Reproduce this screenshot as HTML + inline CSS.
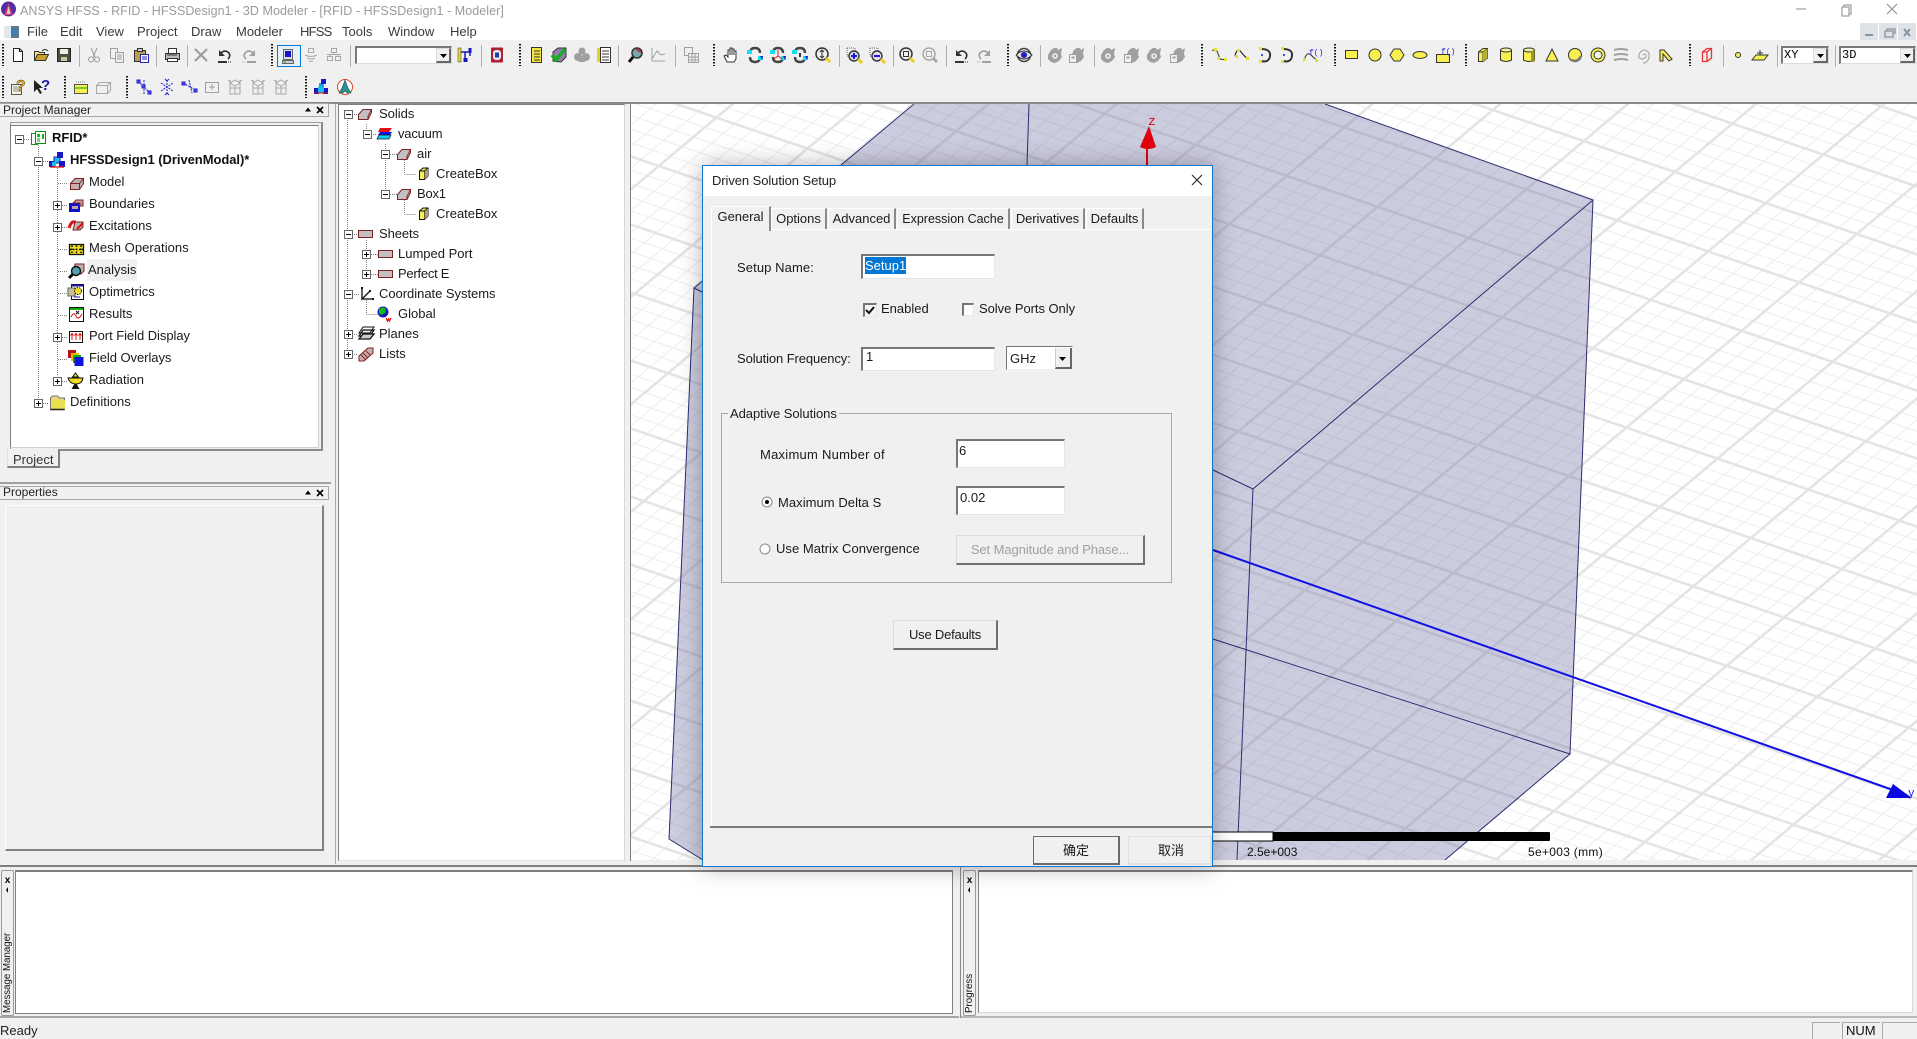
<!DOCTYPE html>
<html><head><meta charset="utf-8"><title>ANSYS HFSS</title>
<style>
html,body{margin:0;padding:0;background:#f0f0f0}
body{position:relative;width:1917px;height:1039px;overflow:hidden;font-family:"Liberation Sans","Noto Sans CJK SC",sans-serif;font-size:13px;color:#1a1a1a}
.a{position:absolute;box-sizing:border-box}
.t{position:absolute;white-space:nowrap;line-height:16px}
.m{font-size:13px;color:#3a3a3a}
.in{position:absolute;box-sizing:border-box;background:#fff;border-top:2px solid #767676;border-left:2px solid #767676;border-right:1px solid #e6e6e6;border-bottom:1px solid #e6e6e6}
.btn{position:absolute;box-sizing:border-box;background:#f0f0f0;border-top:1px solid #dcdcdc;border-left:1px solid #dcdcdc;border-right:2px solid #6f6f6f;border-bottom:2px solid #6f6f6f;text-align:center}
.tab{position:absolute;box-sizing:border-box;background:#f0f0f0;border-top:1px solid #fff;border-left:1px solid #fff;border-right:2px solid #8a8a8a;text-align:center;line-height:19px;height:21px;top:208px}
.d{z-index:20}
svg{position:absolute;left:0;top:0;overflow:visible}
</style></head><body>

<!-- title + menu -->
<div class="a" style="left:0;top:0;width:1917px;height:40px;background:#fff"></div>
<div class="t" style="left:20px;top:3px;color:#9a9a9a;font-size:12.5px;letter-spacing:.06px">ANSYS HFSS - RFID - HFSSDesign1 - 3D Modeler - [RFID - HFSSDesign1 - Modeler]</div>
<div class="t m" style="left:27px;top:24px">File</div>
<div class="t m" style="left:60px;top:24px">Edit</div>
<div class="t m" style="left:96px;top:24px">View</div>
<div class="t m" style="left:137px;top:24px">Project</div>
<div class="t m" style="left:191px;top:24px">Draw</div>
<div class="t m" style="left:236px;top:24px">Modeler</div>
<div class="t m" style="left:300px;top:24px;letter-spacing:-.8px">HFSS</div>
<div class="t m" style="left:342px;top:24px">Tools</div>
<div class="t m" style="left:388px;top:24px">Window</div>
<div class="t m" style="left:450px;top:24px">Help</div>
<div class="a" style="left:1860px;top:23px;width:18px;height:17px;background:#dfe3e8"></div>
<div class="a" style="left:1879px;top:23px;width:18px;height:17px;background:#dfe3e8"></div>
<div class="a" style="left:1898px;top:23px;width:18px;height:17px;background:#dfe3e8"></div>

<!-- toolbar bottom line -->
<div class="a" style="left:0;top:102px;width:1917px;height:2px;background:#8a8a8a"></div>
<!-- selected toolbar -->
<div class="a" style="left:277px;top:45px;width:24px;height:22px;border:1px solid #0078d7;background:#e5f1fb"></div>
<!-- combos -->
<div class="a" style="left:355px;top:46px;width:97px;height:18px;background:#fff;border:2px solid #7a7a7a;border-right:1px solid #ddd;border-bottom:1px solid #ddd"></div>
<div class="a" style="left:436px;top:48px;width:15px;height:15px;background:#f0f0f0;border-right:2px solid #666;border-bottom:2px solid #666;border-top:1px solid #ddd;border-left:1px solid #ddd"></div>
<div class="a" style="left:1781px;top:46px;width:48px;height:18px;background:#fff;border:2px solid #7a7a7a;border-right:1px solid #ddd;border-bottom:1px solid #ddd"></div>
<div class="a" style="left:1813px;top:48px;width:15px;height:15px;background:#f0f0f0;border-right:2px solid #666;border-bottom:2px solid #666;border-top:1px solid #ddd;border-left:1px solid #ddd"></div>
<div class="t" style="left:1784px;top:47px;font-family:'Liberation Mono',monospace;font-size:12px;color:#000">XY</div>
<div class="a" style="left:1839px;top:46px;width:77px;height:18px;background:#fff;border:2px solid #7a7a7a;border-right:1px solid #ddd;border-bottom:1px solid #ddd"></div>
<div class="a" style="left:1900px;top:48px;width:15px;height:15px;background:#f0f0f0;border-right:2px solid #666;border-bottom:2px solid #666;border-top:1px solid #ddd;border-left:1px solid #ddd"></div>
<div class="t" style="left:1842px;top:47px;font-family:'Liberation Mono',monospace;font-size:12px;color:#000">3D</div>

<!-- left panel -->
<div class="a" style="left:0;top:103px;width:329px;height:14px;background:#f0f0f0;border:1px solid #a8a8a8;border-left:none"></div>
<div class="t" style="left:3px;top:102px;font-size:12px;color:#222">Project Manager</div>
<div class="a" style="left:10px;top:122px;width:313px;height:329px;border:1px solid #a0a0a0;border-right:2px solid #8a8a8a;border-bottom:2px solid #8a8a8a;background:#f0f0f0"></div>
<div class="a" style="left:10px;top:125px;width:309px;height:323px;background:#fff;border-left:1px solid #808080;border-top:1px solid #808080;border-right:1px solid #d0d0d0;border-bottom:1px solid #d0d0d0"></div>
<div class="a" style="left:87px;top:259px;width:50px;height:22px;background:#f0f0f0"></div>
<div class="a" style="left:7px;top:449px;width:53px;height:19px;background:#f0f0f0;border-left:1px solid #ddd;border-right:2px solid #808080;border-bottom:2px solid #808080"></div>
<div class="t" style="left:13px;top:452px;color:#333">Project</div>

<div class="t" style="left:52px;top:130px;font-weight:bold;color:#111">RFID*</div>
<div class="t" style="left:70px;top:152px;font-weight:bold;color:#111;letter-spacing:-.05px">HFSSDesign1 (DrivenModal)*</div>
<div class="t" style="left:89px;top:174px">Model</div>
<div class="t" style="left:89px;top:196px">Boundaries</div>
<div class="t" style="left:89px;top:218px">Excitations</div>
<div class="t" style="left:89px;top:240px;letter-spacing:.05px">Mesh Operations</div>
<div class="t" style="left:88px;top:262px">Analysis</div>
<div class="t" style="left:89px;top:284px">Optimetrics</div>
<div class="t" style="left:89px;top:306px">Results</div>
<div class="t" style="left:89px;top:328px;letter-spacing:-.05px">Port Field Display</div>
<div class="t" style="left:89px;top:350px;letter-spacing:-.05px">Field Overlays</div>
<div class="t" style="left:89px;top:372px">Radiation</div>
<div class="t" style="left:70px;top:394px">Definitions</div>

<div class="a" style="left:0;top:482px;width:331px;height:2px;background:#a0a0a0"></div>
<div class="a" style="left:0;top:486px;width:329px;height:14px;background:#f0f0f0;border:1px solid #a8a8a8;border-left:none"></div>
<div class="t" style="left:3px;top:484px;font-size:12px;color:#222">Properties</div>
<div class="a" style="left:5px;top:505px;width:319px;height:346px;border-top:1px solid #fff;border-left:1px solid #fff;border-right:2px solid #808080;border-bottom:2px solid #808080"></div>
<div class="a" style="left:335px;top:104px;width:1px;height:760px;background:#a8a8a8"></div>

<!-- middle tree -->
<div class="a" style="left:338px;top:104px;width:287px;height:757px;background:#fff;border-left:1px solid #808080;border-top:1px solid #808080;border-right:1px solid #d8d8d8;border-bottom:1px solid #e4e4e4"></div>
<div class="t" style="left:379px;top:106px">Solids</div>
<div class="t" style="left:398px;top:126px;letter-spacing:-.2px">vacuum</div>
<div class="t" style="left:417px;top:146px">air</div>
<div class="t" style="left:436px;top:166px">CreateBox</div>
<div class="t" style="left:417px;top:186px;letter-spacing:-.2px">Box1</div>
<div class="t" style="left:436px;top:206px">CreateBox</div>
<div class="t" style="left:379px;top:226px;letter-spacing:-.1px">Sheets</div>
<div class="t" style="left:398px;top:246px">Lumped Port</div>
<div class="t" style="left:398px;top:266px;letter-spacing:-.25px">Perfect E</div>
<div class="t" style="left:379px;top:286px;letter-spacing:-.03px">Coordinate Systems</div>
<div class="t" style="left:398px;top:306px">Global</div>
<div class="t" style="left:379px;top:326px">Planes</div>
<div class="t" style="left:379px;top:346px">Lists</div>

<!-- 3D view -->
<svg width="1917" height="1039" style="z-index:1">
<defs>
<clipPath id="vc"><rect x="630" y="104" width="1287" height="756"/></clipPath>
<pattern id="grid" patternUnits="userSpaceOnUse" width="100" height="100" patternTransform="matrix(.91 .31 -.576 .484 1823.4 154.6)">
<g stroke="#ebebeb" fill="none">
<path d="M0 20H100M0 40H100M0 60H100M0 80H100" stroke-width="1.4"/>
<path d="M20 0V100M40 0V100M60 0V100M80 0V100" stroke-width="1.1"/>
</g>
<g stroke="#e4e4e4" fill="none">
<path d="M0 0H100M0 100H100" stroke-width="4"/>
<path d="M0 0V100M100 0V100" stroke-width="3.2"/>
</g>
</pattern>
</defs>
<g clip-path="url(#vc)">
<rect x="630" y="104" width="1287" height="756" fill="#fff"/>
<rect x="630" y="104" width="1287" height="756" fill="url(#grid)"/>
<path d="M914 104H1325L1593 200L1570 754L1445 860H703L669 839L694 288Z" fill="#7576a7" fill-opacity=".37"/>
<g fill="none" stroke="#2d2d70" stroke-width="1">
<path d="M914 104L694 288L669 839L703 860"/>
<path d="M1325 104L1593 200L1570 754L1445 860"/>
<path d="M1593 200L1253 489L1237 860"/>
<path d="M1253 489L1213 470"/>
<path d="M1213 639L1570 754"/>
<path d="M1029 104L1027 165"/>
<path d="M694 288L706 294"/>
</g>
<path d="M1213 550L1893 790" stroke="#1212e6" stroke-width="2" fill="none"/>
<path d="M1893 784L1886 798H1912Z" fill="#0a0ae0"/>
<text x="1908" y="796" font-family="Liberation Mono,monospace" font-size="11" fill="#1212e6">y</text>
<path d="M1149 126L1140 147Q1148 151 1156 147Z" fill="#e00010"/>
<path d="M1147 147V166" stroke="#e00010" stroke-width="2"/>
<text x="1148" y="125" font-family="Liberation Mono,monospace" font-size="13" fill="#e00010">z</text>
<rect x="1150" y="832" width="123" height="9" fill="#fff" stroke="#000"/>
<rect x="1273" y="832" width="277" height="9" rx="1" fill="#000"/>
</g>
<path d="M630.500 104V861" stroke="#808080" fill="none"/>
</svg>
<div class="t" style="left:1247px;top:844px;font-size:12px;color:#111;z-index:2">2.5e+003</div>
<div class="t" style="left:1528px;top:844px;font-size:12px;color:#111;z-index:2;letter-spacing:.3px">5e+003 (mm)</div>

<!-- lower panes -->
<div class="a" style="left:0;top:865px;width:1917px;height:2px;background:#808080"></div>
<div class="a" style="left:1px;top:870px;width:13px;height:146px;border:1px solid #9a9a9a;border-radius:2px"></div>
<div class="a" style="left:15px;top:870px;width:938px;height:144px;background:#fff;border:1px solid #808080;border-top:2px solid #808080"></div>
<div class="a" style="left:0;top:1016px;width:959px;height:2px;background:#a6a6a6"></div>
<div class="a" style="left:960px;top:866px;width:1px;height:152px;background:#8a8a8a"></div>
<div class="a" style="left:963px;top:870px;width:13px;height:146px;border:1px solid #9a9a9a;border-radius:2px"></div>
<div class="a" style="left:978px;top:870px;width:935px;height:143px;background:#fff;border-left:1px solid #808080;border-top:2px solid #808080;border-right:1px solid #d8d8d8;border-bottom:1px solid #d8d8d8"></div>
<div class="a" style="left:961px;top:1016px;width:956px;height:2px;background:#b8b8b8"></div>
<div class="t" style="left:3px;top:876px;width:9px;height:11px;font:bold 10px/10px 'Liberation Sans',sans-serif;color:#000;text-align:center">x</div>
<div class="t" style="left:965px;top:876px;width:9px;height:11px;font:bold 10px/10px 'Liberation Sans',sans-serif;color:#000;text-align:center">x</div>
<div class="t" style="left:1px;top:933px;width:13px;height:80px;line-height:13px;writing-mode:vertical-rl;transform:rotate(180deg);font-size:9.7px;color:#111">Message Manager</div>
<div class="t" style="left:964px;top:973px;width:12px;height:40px;line-height:12px;writing-mode:vertical-rl;transform:rotate(180deg);font-size:9.8px;color:#111">Progress</div>
<div class="t" style="left:0;top:1023px;color:#222">Ready</div>
<div class="a" style="left:1812px;top:1022px;width:28px;height:17px;border-top:1px solid #a8a8a8;border-left:1px solid #a8a8a8"></div>
<div class="a" style="left:1842px;top:1022px;width:38px;height:17px;border-top:1px solid #a8a8a8;border-left:1px solid #a8a8a8"></div>
<div class="t" style="left:1846px;top:1023px;color:#111;font-size:13px">NUM</div>
<div class="a" style="left:1882px;top:1022px;width:35px;height:17px;border-top:1px solid #a8a8a8;border-left:1px solid #a8a8a8"></div>

<!-- icons -->
<svg width="1917" height="1039" style="z-index:3">
<defs>
<g id="grip"><path d="M0 0V22" stroke="#111" stroke-width="2" stroke-dasharray="1.5 1.5"/></g>
<g id="sep"><path d="M.5 0V22" stroke="#b0b0b0"/></g>
<g id="pl"><rect x=".5" y=".5" width="8" height="8" fill="#fff" stroke="#666"/><path d="M2 4.500H7M4.500 2V7" stroke="#000"/></g>
<g id="mi"><rect x=".5" y=".5" width="8" height="8" fill="#fff" stroke="#666"/><path d="M2 4.500H7" stroke="#000"/></g>
<!-- toolbar -->
<g id="new"><path d="M3.500 1.500h6l3 3v10h-9z" fill="#fff" stroke="#222"/><path d="M9.500 1.500v3h3" fill="none" stroke="#222"/></g>
<g id="open"><path d="M1.500 13.500v-9h4l1 1h5v2" fill="#f4e27a" stroke="#333"/><path d="M1.500 13.500l3-6h11l-3 6z" fill="#c9a02a" stroke="#333"/><path d="M9 4q3-3 6 0" stroke="#333" fill="none"/></g>
<g id="save"><path d="M1.500 1.500h13v13h-13z" fill="#4e4e3a" stroke="#222"/><path fill="#eee" d="M4 2h8v5H4z"/><path fill="#c8c8a8" d="M5 10h6v4H5z"/></g>
<g id="cut" fill="none" stroke="#9a9a9a"><path d="M5 1l4 9M11 1L7 10"/><circle cx="5" cy="12.500" r="2.500"/><circle cx="11" cy="12.500" r="2.500"/></g>
<g id="copy" stroke="#a0a0a0" fill="#f0f0f0"><path d="M1.500 1.500h7v10h-7z"/><path d="M6.500 5.500h8v10h-8z"/><path d="M8 8h5M8 10h5M8 12h5" fill="none"/></g>
<g id="paste"><path d="M1.500 3.500h11v11h-11z" fill="#b8a050" stroke="#333"/><path d="M4.500 1.500h5v3h-5z" fill="#ccc" stroke="#333"/><path d="M7.500 7.500h8v8h-8z" fill="#fff" stroke="#2222b0"/><path d="M9 10h5M9 12h5" stroke="#2222b0"/></g>
<g id="print"><path d="M4.500 1.500h8v5h-8z" fill="#fff" stroke="#333"/><path d="M1.500 6.500h14v6h-14z" fill="#bbb" stroke="#333"/><path d="M3.500 11.500h10v3h-10z" fill="#fff" stroke="#333"/><path d="M3 8h10" stroke="#333"/></g>
<g id="del"><path d="M2 2L14 14M14 2L2 14" stroke="#9a9a9a" stroke-width="2"/></g>
<g id="undo" fill="none"><path d="M4 6Q8 2 12 6Q14 9 11 12" stroke="#333" stroke-width="1.600"/><path d="M2 3v6h6z" fill="#333"/><path d="M1 15h9" stroke="#333" stroke-width="2"/><path d="M11 15h4" stroke="#333" stroke-dasharray="1 1"/></g>
<g id="redo" fill="none"><path d="M12 6Q8 2 4 6Q2 9 5 12" stroke="#a0a0a0" stroke-width="1.600"/><path d="M14 3v6H8z" fill="#a0a0a0"/><path d="M6 15h9" stroke="#a0a0a0" stroke-width="2"/><path d="M1 15h4" stroke="#a0a0a0" stroke-dasharray="1 1"/></g>
<g id="mon"><path d="M3.500 1.500h9v10h-9z" fill="#ddd" stroke="#666"/><path d="M5 3h6v6H5z" fill="#1414d0"/><path d="M2.500 12.500h11v3h-11z" fill="#ccc" stroke="#666"/><path d="M4 14h2" stroke="#0a0"/></g>
<g id="gs1" stroke="#a8a8a8" fill="none"><path d="M5.500 1.500h5v4h-5z"/><path d="M2 8q6 3 12 0M4 11q4 2 8 0M6 14q2 1 4 0"/></g>
<g id="gs2" stroke="#a8a8a8" fill="none"><path d="M5.500 1.500h5v4h-5zM1.500 9.500h5v4h-5zM9.500 9.500h5v4h-5zM8 5.500v2M4 9.500v-2h8v2M1 7.500h3M12 7.500h3"/></g>
<g id="tree"><path d="M2 1v12M12 1v8M2 5h10M7 5v9" stroke="#1818c0" stroke-width="1.500" fill="none"/><rect x="0" y="1" width="3" height="14" fill="#e8d840" stroke="#333" stroke-width=".5"/><rect x="10.500" y="1" width="3" height="5" fill="#1818c0"/><rect x="5.500" y="11" width="4" height="4" fill="#1818c0"/></g>
<g id="qr"><rect x="2" y="0.500" width="12" height="15" fill="#b02030" rx="1"/><rect x="4" y="3" width="8" height="10" fill="#e8e8f8" rx="3"/><rect x="6" y="5.500" width="4" height="5" fill="#2040a0"/></g>
<g id="ydoc"><path d="M2.500 .5h10v15h-10z" fill="#f6e640" stroke="#333"/><path d="M5 4h6M5 7h6M5 10h6M5 13h6" stroke="#333"/></g>
<g id="chk"><path d="M2 14V5l5-4h8v9l-5 5z" fill="#9a7ab0" stroke="#333"/><path d="M1 8l4 5 9-11" stroke="#10b020" stroke-width="3.500" fill="none"/></g>
<g id="blob" fill="#a0a0a0"><circle cx="8" cy="4" r="3.500"/><circle cx="4" cy="10" r="4"/><circle cx="12" cy="10" r="4"/><rect x="5" y="11" width="6" height="4"/></g>
<g id="ldoc"><path d="M3.500 .5h10v15h-10z" fill="#fff" stroke="#333"/><path d="M5 4h7M5 7h7M5 10h7M5 13h7" stroke="#333"/><path d="M1.500 1v14" stroke="#e8d020" stroke-width="3"/></g>
<g id="mag"><circle cx="9" cy="6" r="5" fill="#7aa" stroke="#333" stroke-width="1.600"/><path d="M5 10l-4 5" stroke="#111" stroke-width="3"/><path d="M8 2l5 3" stroke="#b03040" stroke-width="2"/></g>
<g id="plot" fill="none" stroke="#a0a0a0"><path d="M2 1v13h13"/><path d="M2 12l5-8 4 4 4-1"/></g>
<g id="tbl" stroke="#a0a0a0" fill="#f0f0f0"><path d="M1.500 .5h8v8h-8z"/><path d="M5.500 6.500h10v9h-10z"/><path d="M5.500 10h10M5.500 13h10M9 6.500v9M12 6.500v9" fill="none"/></g>
<g id="hand" fill="#fff" stroke="#333"><path d="M4 15L1 9l2-1 2 2V3h2v5V1h2v7V2h2v6V4h2v8l-2 3z"/></g>
<g id="rot" fill="none"><path d="M3 6Q3 1 8 1T13 6" stroke="#444" stroke-width="2.400"/><path d="M3 10Q3 15 8 15T13 10" stroke="#444" stroke-width="2.400"/><path d="M0 3h5v4H0z" fill="#10e0f0"/><path d="M11 13h5v-4h-5z" fill="#10e0f0"/><path d="M13 9l3 0-1 4z" fill="#2020d0"/></g>
<g id="rot2" fill="none"><use href="#rot"/><path d="M8 3v6M4 12l4-3 4 3" stroke="#d02020"/></g>
<g id="rot3" fill="none"><use href="#rot"/><path d="M8 6v4" stroke="#333" stroke-width="2"/></g>
<g id="zm" fill="none"><circle cx="7" cy="7" r="6" stroke="#333" stroke-width="1.500"/><path d="M7 3v8M5 5l2-2 2 2M5 9l2 2 2-2" stroke="#333"/><path d="M11 11l4 4" stroke="#e8d020" stroke-width="3"/></g>
<g id="zin" fill="none"><path d="M1 1h8v3M1 1v8h3" stroke="#666" stroke-dasharray="1 1"/><circle cx="8" cy="9" r="5" fill="#dde" stroke="#333" stroke-width="1.400"/><path d="M5 9h6M8 6v6" stroke="#1818d0" stroke-width="2"/><path d="M12 12l4 4" stroke="#e8d020" stroke-width="3"/></g>
<g id="zout" fill="none"><path d="M1 1h8v3M1 1v8h3" stroke="#666" stroke-dasharray="1 1"/><circle cx="8" cy="9" r="5" fill="#dde" stroke="#333" stroke-width="1.400"/><path d="M5 9h6" stroke="#1818d0" stroke-width="2"/><path d="M12 12l4 4" stroke="#e8d020" stroke-width="3"/></g>
<g id="zf" fill="none"><circle cx="7" cy="7" r="6" stroke="#333" stroke-width="1.500"/><rect x="4.500" y="4.500" width="5" height="5" stroke="#333"/><path d="M11 11l4 4" stroke="#e8d020" stroke-width="3"/></g>
<g id="zg" fill="none"><circle cx="7" cy="7" r="6" stroke="#a8a8a8" stroke-width="1.500"/><rect x="4.500" y="4.500" width="5" height="5" stroke="#a8a8a8"/><path d="M11 11l4 4" stroke="#a8a8a8" stroke-width="3"/></g>
<g id="eye" fill="none"><circle cx="8" cy="8" r="6.500" stroke="#444" stroke-width="1.600"/><path d="M0 8q8-8 16 0q-8 8-16 0" fill="#ddd" stroke="#333"/><circle cx="8" cy="8" r="3" fill="#2020c0"/></g>
<g id="ge1" fill="#a0a0a0"><path d="M1 8L4 3l3-2h3l1 2 4-2-1 6 1 3-3 4-4 2-4-1-3-3z"/><circle cx="8" cy="9" r="2.800" fill="#f0f0f0"/><circle cx="8" cy="9" r="1.200"/></g>
<g id="ge2" fill="#a0a0a0"><path d="M3 7L5 3l3-2h3l1 2 3-2-1 6 1 3-3 4-4 2-4-2z"/><path d="M.5 7.500h7v8h-7z" fill="#f0f0f0" stroke="#a0a0a0"/><path d="M2.500 9.500h3v2h-3z"/></g>
<g id="lin" fill="none"><path d="M1 3l5 1 3 8 6 1" stroke="#333"/><path d="M3 1h3v3H3zM6 10h3v3H6zM13 11h3v3h-3z" fill="#e8e030"/></g>
<g id="spl" fill="none"><path d="M1 9Q3 0 7 5T13 11" stroke="#333" stroke-width="1.300"/><path d="M3 2h3v3H3zM1 8h3v3H1zM12 10h3v3h-3z" fill="#e8e030"/></g>
<g id="arc" fill="none"><path d="M4 2Q14 2 13 9T4 14" stroke="#333" stroke-width="2"/><path d="M2 0h3v3H2zM2 13h3v3H2z" fill="#e8e030"/><circle cx="5" cy="8" r="1" fill="#1818c0"/></g>
<g id="eq" fill="none"><path d="M1 13Q4 4 8 8T15 14" stroke="#333"/><path d="M0 11h3v3H0zM12 12h3v3h-3z" fill="#e8e030"/><text x="6" y="8" font-size="8" fill="#2020d0" font-family="Liberation Mono,monospace">f()</text></g>
<g id="rect"><rect x="1.500" y="3.500" width="12" height="8" fill="#f8f050" stroke="#333"/></g>
<g id="circ"><circle cx="8" cy="8" r="6" fill="#f8f050" stroke="#333"/></g>
<g id="hexa"><path d="M5 2h6l4 6-4 6H5L1 8z" fill="#f8f050" stroke="#333"/></g>
<g id="ell"><ellipse cx="8" cy="8" rx="7" ry="3.500" fill="#f8f050" stroke="#333"/></g>
<g id="eqs"><rect x="1.500" y="7.500" width="13" height="8" fill="#f8f050" stroke="#333"/><text x="6" y="7" font-size="8" fill="#2020d0" font-family="Liberation Mono,monospace">f()</text></g>
<g id="cube"><path d="M3.500 5L8 1.500h4.500V11L8 14.500H3.500z" fill="#f8f050" stroke="#333"/><path d="M3.500 5H8V14.500M8 5L12.500 1.500" fill="none" stroke="#333"/><path d="M8 5l4.500-3.500V11L8 14.500z" fill="#b8b030"/></g>
<g id="cyl"><path d="M2.500 3v10q5.500 3 11 0V3" fill="#f8f050" stroke="#333"/><ellipse cx="8" cy="3" rx="5.500" ry="2" fill="#f0f0a0" stroke="#333"/></g>
<g id="cyl2"><path d="M2.500 3v10q5.500 3 11 0V3" fill="#f8f050" stroke="#333"/><ellipse cx="8" cy="3" rx="5.500" ry="2" fill="#f0f0a0" stroke="#333"/><path d="M10 4v11h3.500V3z" fill="#a09820"/></g>
<g id="cone"><path d="M8 2L2 14h12z" fill="#f8f050" stroke="#333"/></g>
<g id="sph"><circle cx="8" cy="8" r="6.500" fill="#f8f050" stroke="#333"/><path d="M4 13q7 3 10-4" stroke="#777" stroke-width="2.500" fill="none"/></g>
<g id="tor"><circle cx="8" cy="8" r="5.500" fill="none" stroke="#333" stroke-width="4"/><circle cx="8" cy="8" r="5.500" fill="none" stroke="#f8f050" stroke-width="2"/></g>
<g id="helix" fill="none" stroke="#a0a0a0" stroke-width="2"><path d="M1 3q7-2 14 0M1 8q7-2 14 0M1 13q7-2 14 0"/></g>
<g id="spir" fill="none" stroke="#b0b0b0" stroke-width="1.300"><path d="M8 8q2-2 3 0t-3 4q-5 0-4-4t5-5q6 1 5 7t-6 6"/></g>
<g id="bond"><path d="M2 14V3h4l8 9-3 2-6-7H5v7z" fill="#f8f050" stroke="#333"/></g>
<g id="rbox"><path d="M3.500 5L8 1.500h4.500V11L8 14.500H3.500zM3.500 5H8V14.500M8 5L12.500 1.500" fill="none" stroke="#f03030" stroke-width="1.300"/></g>
<g id="pt"><circle cx="8" cy="8" r="2.500" fill="#f8f050" stroke="#333"/></g>
<g id="pln"><path d="M0 13L4 8h12l-4 5z" fill="#f8f050" stroke="#333"/><path d="M8 3v5M5 6h6" stroke="#333"/></g>
<g id="help"><path d="M1.500 5.500h10v10h-10z" fill="#f8f8e0" stroke="#555"/><path d="M3 8h7M3 10h7M3 12h7" stroke="#888"/><text x="6" y="12" font-size="16" font-weight="bold" fill="#e8b010" stroke="#333" stroke-width=".4" font-family="Liberation Sans,sans-serif">?</text></g>
<g id="whelp"><path d="M1 1v12l3-3 3 5 2-1-3-5h4z" fill="#222"/><text x="8" y="11" font-size="15" font-weight="bold" fill="#1818a0" font-family="Liberation Sans,sans-serif">?</text></g>
<g id="ybox"><path d="M1.500 5.500h13v9h-13z" fill="#f8f050" stroke="#555"/><path d="M1 9h14" stroke="#10a010"/><path d="M3 3h10" stroke="#888" stroke-dasharray="1 1"/></g>
<g id="gbox" stroke="#a8a8a8" fill="none"><path d="M1.500 6.500h11v8h-11zM1.500 6.500l3-3h11l-3 3M12.500 14.500l3-3v-8"/></g>
<g id="ax1" fill="none" stroke="#2020d0"><path d="M2 2l6 6 6 6M8 1v14" stroke-dasharray="2 1"/><path d="M1 1h3v3H1zM6 6h3v3H6zM12 12h3v3h-3z" fill="#5050e0"/></g>
<g id="ax2" fill="none" stroke="#2020d0"><path d="M8 1v14M2 4l6 4 6-4M2 12l6-4 6 4" stroke-dasharray="2 1"/><path d="M6 0l2 2 2-2M6 16l2-2 2 2"/></g>
<g id="ax3" fill="none" stroke="#2020d0"><path d="M1 4l14 8M7 1l3 13" stroke-dasharray="2 1"/><path d="M0 3h3v3H0zM12 10h3v3h-3z" fill="#5050e0"/></g>
<g id="gb1" fill="none" stroke="#a0a0a0"><path d="M1.500 3.500h13v10h-13zM5 8h6M8 5v6"/></g>
<g id="gm" fill="none" stroke="#a8a8a8"><path d="M3 15V4l5-3 5 3v11zM3 4l5 3 5-3M8 7v8M3 9l10 0M1 1l3 2M15 1l-3 2M13 1v3M3 1v3"/></g>
<g id="hf"><path d="M1 9h5v6H1z" fill="#1818c0"/><path d="M6 4h5v6H6z" fill="#18a0e0"/><path d="M10 9h5v6h-5z" fill="#1818c0"/><path d="M5 8h6v6H5z" fill="#10c0f0"/><path d="M8 0h5v5H8z" fill="#1818c0"/><path d="M1 14h14" stroke="#e01010"/></g>
<g id="jet"><circle cx="8" cy="8" r="7.500" fill="#fff" stroke="#e04020"/><path d="M8 1L5 9l-3 5h4l2-2 2 2h4l-3-5z" fill="#309090" stroke="#1a5a5a" stroke-width=".6"/></g>
<!-- tree -->
<g id="proj"><path d="M1.500 3.500h6v11h-6z" fill="#fff" stroke="#109010"/><path d="M5.500 1.500h10v12h-10z" fill="#fff" stroke="#109010"/><path d="M7 4h3v3H7zM12 4h2v5h-2z" fill="#10c010"/><path d="M7 9h3M7 11h3" stroke="#109010"/></g>
<g id="des"><path d="M0 9h6v6H0z" fill="#1818c0"/><path d="M5 5h6v6H5z" fill="#18c0f0" stroke="#1818c0"/><path d="M8 0h6v6H8z" fill="#1818c0"/><path d="M10 9h6v6h-6z" fill="#1818c0"/><path d="M3 10h4v4H3z" fill="#18c0f0"/><path d="M1 15h14" stroke="#e01010" stroke-width="1.300"/></g>
<g id="mdl"><path d="M1.500 14.500V8.500L6 3.500h8.500v5L10.500 14.500z" fill="#c0b0b0" stroke="#802020"/><path d="M1.500 8.500h9v6M10.500 8.500l4-5" fill="none" stroke="#802020"/></g>
<g id="bnd"><path d="M1 6h11v9H1z" fill="#1010c8"/><path d="M4 9h6v3H4z" fill="#c0a0a0"/><path d="M8 3h7v6h-3V6H5z" fill="#c0a0a0" stroke="#802020"/></g>
<g id="exc"><path d="M1 10q3-9 7-5l4 5" fill="none" stroke="#e01010" stroke-width="3"/><path d="M7 4h8v5l-3 3H5z" fill="#c0b0b0" stroke="#802020"/><path d="M9 11l6-6" stroke="#e01010" stroke-width="2"/></g>
<g id="msh"><rect x=".5" y="3.500" width="14" height="10" fill="#f0e020" stroke="#111" stroke-width="1.300"/><path d="M3 4.500v8M7.500 4.500v8M12 4.500v8M1 8.500h13" stroke="#111" stroke-width="1.600" stroke-dasharray="1.500 1.500"/></g>
<g id="ana"><path d="M7 1h9v7l-3 3H5z" fill="#c0b0b0" stroke="#802020"/><circle cx="8" cy="8" r="4.500" fill="#50a0b0" stroke="#111" stroke-width="1.400"/><path d="M5 11l-4 4" stroke="#111" stroke-width="3"/></g>
<g id="opt"><path d="M3.500 .5h12v15h-12z" fill="#fff" stroke="#111"/><path d="M3.500 .5h12v2h-12z" fill="#1818a0"/><rect x="0" y="4" width="7" height="8" fill="#c8c090" stroke="#666"/><circle cx="10" cy="7" r="3.500" fill="#f0e020" stroke="#111" stroke-dasharray="1.500 1"/><path d="M6 13h6" stroke="#1818a0"/></g>
<g id="res"><path d="M.5 .5h14v14h-14z" fill="#fff" stroke="#111"/><path d="M1 2h13" stroke="#10b010" stroke-width="2"/><path d="M2 10q3-6 5-1t6-2" fill="none" stroke="#e01010"/><path d="M7 4l3 3M10 4L7 7" stroke="#111"/></g>
<g id="pfd"><path d="M.5 2.500h13v11h-13z" fill="#fff" stroke="#111"/><path d="M3 11V5M7 11V5M11 11V5M1.500 6.500L3 4.500l1.500 2M5.500 6.500L7 4.500l1.500 2M9.500 6.500L11 4.500l1.500 2" fill="none" stroke="#e01010"/></g>
<g id="fov"><path d="M0 0h8v8H0z" fill="#c01010"/><path d="M3 3h8v8H3z" fill="#e8c000"/><path d="M5 5h8v8H5z" fill="#10b010"/><path d="M6.500 7h9v9h-9z" fill="#1010e0"/></g>
<g id="rad"><path d="M0 5h15Q14 11 8 11T0 5z" fill="#f0e020" stroke="#111"/><path d="M7.500 0l3 4h-6z" fill="#f0e020" stroke="#111"/><path d="M6.500 11h2l3 5h-8z" fill="#111"/></g>
<g id="fold"><path d="M.5 14.500V3l2-2h5l2 2h5v11.500z" fill="#e8d878" stroke="#777"/><path d="M2 5h13v9H2z" fill="#e8e050"/><path d="M.5 14.500h14" stroke="#222" stroke-width="1.500"/></g>
<g id="sol"><path d="M.5 12.500V7.500L5 2.500h8.500L10 9.500v3z" fill="#c0c0c0" stroke="#802020"/><path d="M.5 12.500h9.500l3.500-7v-3" fill="none" stroke="#802020"/></g>
<g id="vac"><path d="M3 1h12l-3 4H1z" fill="#e81010"/><path d="M3 5h12l-2 3H1z" fill="#1010e0"/><path d="M2 8h12l-2 4H0z" fill="#10d0f0" stroke="#111" stroke-width=".7"/></g>
<g id="cb"><path d="M1.500 4L5 1h5v8l-3.500 3.500H1.500z" fill="#f8f050" stroke="#111"/><path d="M6.500 4H1.500M6.500 4V12.500M6.500 4L10 1" fill="none" stroke="#111"/><path d="M6.500 4.500L10 1.500V9L6.500 12.500z" fill="#a8a070"/></g>
<g id="sht"><rect x=".5" y="3.500" width="14" height="7" fill="#c0c0c0" stroke="#802020"/></g>
<g id="csys"><path d="M4 1v12l8-8" fill="none" stroke="#111" stroke-width="1.300"/><path d="M4 13h12" stroke="#111" stroke-width="1.300"/><path d="M3 1h2v2H3zM11 4h2v2h-2zM14 12h2v2h-2z" fill="#111"/></g>
<g id="glb"><circle cx="6" cy="6" r="5.500" fill="#1818c0"/><path d="M2 3q4-3 7 0l-1 4-4 2-2-2z" fill="#10c010"/><path d="M9 12l1.500 3 1-2 1 2 1.500-3" fill="none" stroke="#e01010" stroke-width="1.300"/></g>
<g id="plns"><path d="M1 10l4-6h11l-4 6z" fill="#eee" stroke="#111" stroke-width="1.300"/><path d="M1 7l4-6h11l-4 6z" fill="none" stroke="#111"/><path d="M1 13l4-5h11l-4 5z" fill="#ccc" stroke="#111" stroke-width="1.300"/></g>
<g id="lst"><path d="M1 10L10 2h5v5l-9 8H1z" fill="#c8b0b0" stroke="#802020"/><path d="M5 7l5 5M8 5l4 4M3 9l5 5" stroke="#802020"/></g>
</defs>

<!-- title icons -->
<circle cx="8.500" cy="9" r="7.500" fill="#5030a0"/><path d="M8.500 3L4 15h9z" fill="#e03060"/><path d="M8.500 6L6.500 14h4z" fill="#d0d0e0"/>
<rect x="4" y="26" width="15" height="12" fill="#607d8b"/><rect x="4" y="26" width="7" height="12" fill="#dfe8ee"/><path d="M11 28h6v8h-6z" fill="#4080b0"/>
<path d="M1796 9h10" stroke="#8a8a8a" fill="none"/>
<path d="M1842 7h7v9h-7zM1844 7v-2h7v9h-2" stroke="#8a8a8a" fill="none"/>
<path d="M1887 4l10 10M1897 4l-10 10" stroke="#8a8a8a" fill="none"/>
<path d="M1865 35h8" stroke="#8792a2" stroke-width="2"/>
<path d="M1885 31h8v6h-8zM1887 31v-2h8v5" stroke="#8792a2" fill="none" stroke-width="1.300"/>
<path d="M1904 29l6 7M1910 29l-6 7" stroke="#8792a2" stroke-width="2"/>
<path d="M440 54h7l-3.500 4z M1817 54h7l-3.500 4z M1904 54h7l-3.500 4z" fill="#000"/>

<!-- row 1 -->
<g>
<use href="#grip" x="3" y="44"/><use href="#new" x="10" y="47"/><use href="#open" x="33" y="47"/><use href="#save" x="56" y="47"/><use href="#sep" x="79" y="45"/>
<use href="#cut" x="86" y="47"/><use href="#copy" x="109" y="47"/><use href="#paste" x="133" y="47"/><use href="#sep" x="156" y="45"/><use href="#print" x="164" y="47"/><use href="#sep" x="187" y="45"/>
<use href="#del" x="193" y="47"/><use href="#undo" x="217" y="47"/><use href="#redo" x="241" y="47"/><use href="#grip" x="272" y="44"/><use href="#mon" x="280" y="48"/><use href="#gs1" x="303" y="47"/><use href="#gs2" x="326" y="47"/><use href="#sep" x="350" y="45"/>
<use href="#tree" x="458" y="47"/><use href="#sep" x="481" y="45"/><use href="#qr" x="489" y="47"/><use href="#grip" x="520" y="44"/><use href="#ydoc" x="529" y="47"/><use href="#chk" x="551" y="47"/><use href="#blob" x="574" y="47"/><use href="#ldoc" x="597" y="47"/><use href="#sep" x="618" y="45"/><use href="#mag" x="628" y="47"/><use href="#plot" x="650" y="47"/><use href="#sep" x="675" y="45"/><use href="#tbl" x="683" y="47"/>
<use href="#grip" x="714" y="44"/><use href="#hand" x="723" y="47"/><use href="#rot" x="747" y="47"/><use href="#rot2" x="770" y="47"/><use href="#rot3" x="792" y="47"/><use href="#zm" x="815" y="47"/><use href="#sep" x="839" y="45"/><use href="#zin" x="846" y="47"/><use href="#zout" x="869" y="47"/><use href="#sep" x="893" y="45"/><use href="#zf" x="899" y="47"/><use href="#zg" x="922" y="47"/><use href="#sep" x="946" y="45"/><use href="#undo" x="954" y="47"/><use href="#redo" x="976" y="47"/>
<use href="#grip" x="1008" y="44"/><use href="#eye" x="1016" y="47"/><use href="#sep" x="1040" y="45"/><use href="#ge1" x="1047" y="47"/><use href="#ge2" x="1069" y="47"/><use href="#sep" x="1094" y="45"/><use href="#ge1" x="1100" y="47"/><use href="#ge2" x="1124" y="47"/><use href="#ge1" x="1146" y="47"/><use href="#ge2" x="1170" y="47"/>
<use href="#grip" x="1202" y="44"/><use href="#lin" x="1211" y="47"/><use href="#spl" x="1234" y="47"/><use href="#arc" x="1257" y="47"/><use href="#arc" x="1279" y="47"/><use href="#eq" x="1303" y="47"/><use href="#grip" x="1335" y="44"/>
<use href="#rect" x="1344" y="47"/><use href="#circ" x="1367" y="47"/><use href="#hexa" x="1389" y="47"/><use href="#ell" x="1412" y="47"/><use href="#eqs" x="1435" y="47"/><use href="#grip" x="1466" y="44"/>
<use href="#cube" x="1475" y="47"/><use href="#cyl" x="1498" y="47"/><use href="#cyl2" x="1521" y="47"/><use href="#cone" x="1544" y="47"/><use href="#sph" x="1567" y="47"/><use href="#tor" x="1590" y="47"/><use href="#helix" x="1613" y="47"/><use href="#spir" x="1635" y="47"/><use href="#bond" x="1658" y="47"/><use href="#grip" x="1690" y="44"/><use href="#rbox" x="1699" y="47"/><use href="#sep" x="1723" y="45"/><use href="#pt" x="1730" y="47"/><use href="#pln" x="1752" y="47"/><use href="#sep" x="1777" y="45"/><use href="#sep" x="1835" y="45"/>
</g>
<!-- row 2 -->
<g>
<use href="#grip" x="3" y="76"/><use href="#help" x="10" y="79"/><use href="#whelp" x="33" y="79"/><use href="#grip" x="65" y="76"/><use href="#ybox" x="73" y="79"/><use href="#gbox" x="95" y="79"/><use href="#grip" x="127" y="76"/>
<use href="#ax1" x="136" y="79"/><use href="#ax2" x="159" y="79"/><use href="#ax3" x="182" y="79"/><use href="#gb1" x="204" y="79"/><use href="#gm" x="227" y="79"/><use href="#gm" x="250" y="79"/><use href="#gm" x="273" y="79"/><use href="#grip" x="306" y="76"/><use href="#hf" x="313" y="79"/><use href="#jet" x="337" y="79"/>
</g>
<!-- panel small arrows -->
<path d="M305 111.500h6l-3-4zM305 494.500h6l-3-4z" fill="#000"/>
<path d="M317 107l6 6M323 107l-6 6M317 490l6 6M323 490l-6 6" stroke="#000" stroke-width="1.600"/>
<path d="M7 887v6l-2-3z" fill="#000" transform="translate(1 0)"/><path d="M969 887v6l-2-3z" fill="#000" transform="translate(1 0)"/>

<!-- left tree lines -->
<g fill="none" stroke="#808080" stroke-dasharray="1 1">
<path d="M24 139.500h6M38.500 143V398M43 161.500h6M57.500 168V376M39 403.500h10M58 183.500h10M62 205.500h6M62 227.500h6M58 249.500h10M58 271.500h10M58 293.500h10M58 315.500h10M62 337.500h6M58 359.500h10M62 381.500h6"/>
<path d="M347.500 118V354M352 114.500h6M366.500 124V130M371 134.500h6M385.500 144V190M390 154.500h7M404.500 160V174M404.500 174.500h12M390 194.500h7M404.500 200V214M404.500 214.500h12M352 234.500h6M366.500 240V270M371 254.500h7M371 274.500h7M352 294.500h7M366.500 300V314M366.500 314.500h11M352 334.500h6M352 354.500h6"/>
</g>
<use href="#mi" x="15" y="135"/><use href="#proj" x="30" y="130"/>
<use href="#mi" x="34" y="157"/><use href="#des" x="49" y="152"/>
<use href="#mdl" x="69" y="175"/>
<use href="#pl" x="53" y="201"/><use href="#bnd" x="68" y="197"/>
<use href="#pl" x="53" y="223"/><use href="#exc" x="68" y="218"/>
<use href="#msh" x="69" y="241"/>
<use href="#ana" x="68" y="263"/>
<use href="#opt" x="68" y="284"/>
<use href="#res" x="69" y="307"/>
<use href="#pl" x="53" y="333"/><use href="#pfd" x="69" y="329"/>
<use href="#fov" x="68" y="350"/>
<use href="#pl" x="53" y="377"/><use href="#rad" x="68" y="373"/>
<use href="#pl" x="34" y="399"/><use href="#fold" x="50" y="395"/>

<use href="#mi" x="344" y="110"/><use href="#sol" x="358" y="107"/>
<use href="#mi" x="363" y="130"/><use href="#vac" x="377" y="127"/>
<use href="#mi" x="381" y="150"/><use href="#sol" x="397" y="147"/>
<use href="#cb" x="418" y="167"/>
<use href="#mi" x="381" y="190"/><use href="#sol" x="397" y="187"/>
<use href="#cb" x="418" y="207"/>
<use href="#mi" x="344" y="230"/><use href="#sht" x="358" y="227"/>
<use href="#pl" x="362" y="250"/><use href="#sht" x="378" y="247"/>
<use href="#pl" x="362" y="270"/><use href="#sht" x="378" y="267"/>
<use href="#mi" x="344" y="290"/><use href="#csys" x="358" y="286"/>
<use href="#glb" x="377" y="306"/>
<use href="#pl" x="344" y="330"/><use href="#plns" x="358" y="326"/>
<use href="#pl" x="344" y="350"/><use href="#lst" x="358" y="346"/>
</svg>

<!-- dialog -->
<div class="a d" style="left:702px;top:165px;width:511px;height:702px;background:#f0f0f0;border:1px solid #0f78cc;box-shadow:0 0 22px rgba(0,0,0,.3)"></div>
<div class="a d" style="left:703px;top:166px;width:509px;height:30px;background:#fff"></div>
<div class="t d" style="left:712px;top:173px;letter-spacing:-.08px;color:#222">Driven Solution Setup</div>
<svg class="d" width="1917" height="1039" style="z-index:21"><path d="M1192 175l10 10M1202 175l-10 10" stroke="#222" stroke-width="1.100" fill="none"/>
<path d="M866 310l3 3 5-6" fill="none" stroke="#111" stroke-width="2"/>
<path d="M1059 357h7l-3.500 4z" fill="#000"/>
<circle cx="767" cy="502" r="5" fill="#fff" stroke="#8a8a8a"/><circle cx="767" cy="502" r="2" fill="#000"/>
<circle cx="765" cy="549" r="5" fill="#fff" stroke="#8a8a8a"/>
</svg>
<!-- tabs -->
<div class="a d" style="left:711px;top:229px;width:501px;height:1px;background:#fff"></div>
<div class="a d" style="left:711px;top:229px;width:1px;height:597px;background:#fff"></div>
<div class="a d" style="left:711px;top:206px;width:60px;height:25px;background:#f0f0f0;border-top:1px solid #fff;border-left:1px solid #fff;border-right:2px solid #8a8a8a;text-align:center;line-height:17px;padding-top:1px;letter-spacing:-.05px">General</div>
<div class="tab d" style="left:771px;width:56px">Options</div>
<div class="tab d" style="left:828px;width:68px">Advanced</div>
<div class="tab d" style="left:897px;width:113px;font-size:12.5px;line-height:20px">Expression Cache</div>
<div class="tab d" style="left:1011px;width:74px;letter-spacing:-.1px">Derivatives</div>
<div class="tab d" style="left:1086px;width:58px">Defaults</div>

<div class="t d" style="left:737px;top:260px;letter-spacing:.1px">Setup Name:</div>
<div class="in d" style="left:861px;top:254px;width:134px;height:25px"></div>
<div class="t d" style="left:865px;top:257px;width:41px;height:17px;background:#0078d7;color:#fff;line-height:17px">Setup1</div>
<div class="in d" style="left:863px;top:303px;width:14px;height:14px;background:#f4f4f4"></div>
<div class="t d" style="left:881px;top:301px">Enabled</div>
<div class="in d" style="left:962px;top:303px;width:12px;height:13px"></div>
<div class="t d" style="left:979px;top:301px;letter-spacing:-.05px">Solve Ports Only</div>
<div class="t d" style="left:737px;top:351px;letter-spacing:-.1px">Solution Frequency:</div>
<div class="in d" style="left:861px;top:347px;width:134px;height:24px"></div>
<div class="t d" style="left:866px;top:349px">1</div>
<div class="in d" style="left:1006px;top:346px;width:67px;height:24px;border-width:1px;border-color:#777 #eee #eee #777"></div>
<div class="t d" style="left:1010px;top:351px">GHz</div>
<div class="a d" style="left:1055px;top:348px;width:17px;height:21px;background:#f0f0f0;border-right:2px solid #666;border-bottom:2px solid #666;border-left:1px solid #ccc"></div>

<div class="a d" style="left:721px;top:413px;width:451px;height:170px;border:1px solid #a8a8a8"></div>
<div class="t d" style="left:728px;top:406px;background:#f0f0f0;padding:0 2px;letter-spacing:-.05px">Adaptive Solutions</div>
<div class="t d" style="left:760px;top:447px;letter-spacing:.25px">Maximum Number of</div>
<div class="in d" style="left:956px;top:439px;width:109px;height:29px"></div>
<div class="t d" style="left:959px;top:443px">6</div>
<div class="t d" style="left:778px;top:495px;letter-spacing:.05px">Maximum Delta S</div>
<div class="in d" style="left:956px;top:486px;width:109px;height:29px"></div>
<div class="t d" style="left:960px;top:490px">0.02</div>
<div class="t d" style="left:776px;top:541px;letter-spacing:.03px">Use Matrix Convergence</div>
<div class="btn d" style="left:956px;top:535px;width:189px;height:30px;line-height:28px;color:#a0a0a0;letter-spacing:-.08px">Set Magnitude and Phase...</div>
<div class="btn d" style="left:893px;top:620px;width:105px;height:30px;line-height:27px;letter-spacing:-.2px">Use Defaults</div>
<div class="a d" style="left:710px;top:826px;width:502px;height:2px;background:#7a7a7a"></div>
<div class="btn d" style="left:1033px;top:836px;width:87px;height:29px;line-height:27px;border:2px solid #6a6a6a;border-top:1px solid #6a6a6a;border-left:1px solid #6a6a6a">确定</div>
<div class="btn d" style="left:1128px;top:836px;width:84px;height:29px;line-height:27px;border-color:#e0e0e0;padding-left:3px">取消</div>

</body></html>
